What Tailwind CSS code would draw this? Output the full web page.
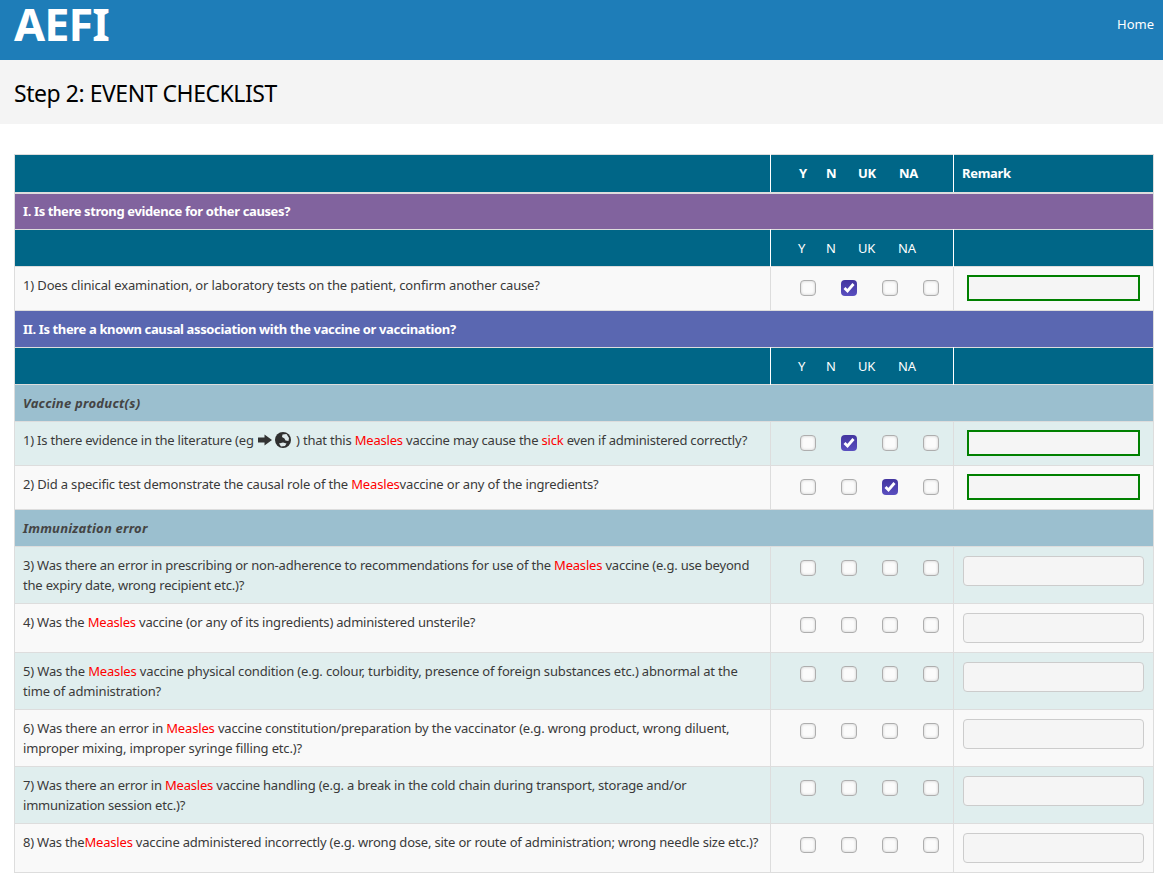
<!DOCTYPE html>
<html><head><meta charset="utf-8"><title>AEFI</title>
<script src="https://cdn.jsdelivr.net/npm/@tailwindcss/browser@4"></script></head>
<body class="bg-white font-['Noto_Sans','Liberation_Sans',sans-serif] text-[#3a3a3a] text-[13px] tracking-[-0.2px] leading-5 h-[880px] overflow-hidden">
<header class="h-[60px] bg-[#1e7db8] flex justify-between pl-[14px] pr-[9px] text-white">
<a class="text-[45px] leading-[48px] font-bold tracking-[-0.9px]">AEFI</a>
<a class="mt-[14px] text-[13px] tracking-normal">Home</a>
</header>
<div class="h-16 bg-[#f4f4f4] flex items-center pl-[14px]"><h1 class="text-[23px] tracking-[-0.46px] text-black font-normal mt-[2px]">Step 2: EVENT CHECKLIST</h1></div>
<div class="pt-[30px] px-[14px]">
<table class="w-[1140px] table-fixed border-collapse border border-[#ddd]">
<colgroup><col class="w-[756px]"><col class="w-[183px]"><col></colgroup>
<tbody>
<tr class="h-[38px] bg-[#006687] text-white font-bold border-b-2 border-[#ddd] tracking-[-0.3px]"><td></td><td class="border-x border-white"><div class="relative h-5"><span class="absolute left-[28px]">Y</span><span class="absolute left-[55px]">N</span><span class="absolute left-[87px]">UK</span><span class="absolute left-[128px]">NA</span></div></td><td class="px-2">Remark</td></tr>
<tr class="h-[37px] bg-[#81639e] text-white font-bold border-b border-[#ddd] tracking-[-0.38px]"><td colspan="3" class="px-2">I. Is there strong evidence for other causes?</td></tr>
<tr class="h-[37px] bg-[#006687] text-white border-b border-[#ddd]"><td></td><td class="border-x border-white"><div class="relative h-5"><span class="absolute left-[27px]">Y</span><span class="absolute left-[55px]">N</span><span class="absolute left-[87px]">UK</span><span class="absolute left-[127px]">NA</span></div></td><td></td></tr>

<tr class="h-[44px] bg-[#f9f9f9] border-b border-[#ddd] align-top"><td class="p-2 border-r border-[#ddd] tracking-[-0.14px]">1) Does clinical examination, or laboratory tests on the patient, confirm another cause?</td><td class="border-r border-[#ddd]"><div class="flex gap-[25px] pl-[29px] pt-[13px]"><input type="checkbox" class="appearance-none size-4 rounded-[4px] border border-[#aeaeae] bg-[#fbfbfb] shadow-[inset_0_0_3px_rgba(0,0,0,.2)]"><span class="size-4 rounded-[4px] bg-linear-to-b from-[#43359f] to-[#5a4fc0]"><svg viewBox="0 0 16 16" class="size-4"><path d="M3.500 8l3 3 6-7" fill="none" stroke="#fff" stroke-width="2.800"/></svg></span><input type="checkbox" class="appearance-none size-4 rounded-[4px] border border-[#aeaeae] bg-[#fbfbfb] shadow-[inset_0_0_3px_rgba(0,0,0,.2)]"><input type="checkbox" class="appearance-none size-4 rounded-[4px] border border-[#aeaeae] bg-[#fbfbfb] shadow-[inset_0_0_3px_rgba(0,0,0,.2)]"></div></td><td class="pt-2 pl-[13px]"><input class="block w-[173px] h-[26px] bg-[#f5f5f5] border-2 border-[#008000]"></td></tr>

<tr class="h-[37px] bg-[#5a67b1] text-white font-bold border-b border-[#ddd] tracking-[-0.36px]"><td colspan="3" class="px-2">II. Is there a known causal association with the vaccine or vaccination?</td></tr>
<tr class="h-[37px] bg-[#006687] text-white border-b border-[#ddd]"><td></td><td class="border-x border-white"><div class="relative h-5"><span class="absolute left-[27px]">Y</span><span class="absolute left-[55px]">N</span><span class="absolute left-[87px]">UK</span><span class="absolute left-[127px]">NA</span></div></td><td></td></tr>
<tr class="h-[37px] bg-[#9bbfcf] text-[#444] font-bold italic border-b border-[#ddd] tracking-[0.25px]"><td colspan="3" class="px-2">Vaccine product(s)</td></tr>

<tr class="h-[44px] bg-[#e0eeee] border-b border-[#ddd] align-top"><td class="p-2 border-r border-[#ddd]"><span class="flex items-center whitespace-nowrap">1) Is there evidence in the literature (eg&nbsp;<svg viewBox="0 0 14 12" class="w-[14px] h-3 ml-px"><path d="M0 3.500h6.500V.5L14 6l-7.500 5.500v-3H0z" fill="#333"/></svg><svg viewBox="0 0 16 16" class="size-4 ml-[3px] mr-[2px]"><circle cx="8" cy="8" r="8" fill="#2f2f2f"/><path d="M7.500 2.500l4-.5 2.500 4-.5 3-3-.5-1-2-2.500-1.500zM4 11.500l4-1 3.500 1-1.500 2.500-4 .5z" fill="#dfe9ea"/></svg>&nbsp;) that this&nbsp;<span class="text-[#f00]">Measles</span>&nbsp;vaccine may cause the&nbsp;<span class="text-[#f00]">sick</span>&nbsp;even if administered correctly?</span></td><td class="border-r border-[#ddd]"><div class="flex gap-[25px] pl-[29px] pt-[13px]"><input type="checkbox" class="appearance-none size-4 rounded-[4px] border border-[#aeaeae] bg-[#fbfbfb] shadow-[inset_0_0_3px_rgba(0,0,0,.2)]"><span class="size-4 rounded-[4px] bg-linear-to-b from-[#43359f] to-[#5a4fc0]"><svg viewBox="0 0 16 16" class="size-4"><path d="M3.500 8l3 3 6-7" fill="none" stroke="#fff" stroke-width="2.800"/></svg></span><input type="checkbox" class="appearance-none size-4 rounded-[4px] border border-[#aeaeae] bg-[#fbfbfb] shadow-[inset_0_0_3px_rgba(0,0,0,.2)]"><input type="checkbox" class="appearance-none size-4 rounded-[4px] border border-[#aeaeae] bg-[#fbfbfb] shadow-[inset_0_0_3px_rgba(0,0,0,.2)]"></div></td><td class="pt-2 pl-[13px]"><input class="block w-[173px] h-[26px] bg-[#f5f5f5] border-2 border-[#008000]"></td></tr>

<tr class="h-[44px] bg-[#f9f9f9] border-b border-[#ddd] align-top"><td class="p-2 border-r border-[#ddd] tracking-[-0.17px]">2) Did a specific test demonstrate the causal role of the <span class="text-[#f00]">Measles</span>vaccine or any of the ingredients?</td><td class="border-r border-[#ddd]"><div class="flex gap-[25px] pl-[29px] pt-[13px]"><input type="checkbox" class="appearance-none size-4 rounded-[4px] border border-[#aeaeae] bg-[#fbfbfb] shadow-[inset_0_0_3px_rgba(0,0,0,.2)]"><input type="checkbox" class="appearance-none size-4 rounded-[4px] border border-[#aeaeae] bg-[#fbfbfb] shadow-[inset_0_0_3px_rgba(0,0,0,.2)]"><span class="size-4 rounded-[4px] bg-linear-to-b from-[#43359f] to-[#5a4fc0]"><svg viewBox="0 0 16 16" class="size-4"><path d="M3.500 8l3 3 6-7" fill="none" stroke="#fff" stroke-width="2.800"/></svg></span><input type="checkbox" class="appearance-none size-4 rounded-[4px] border border-[#aeaeae] bg-[#fbfbfb] shadow-[inset_0_0_3px_rgba(0,0,0,.2)]"></div></td><td class="pt-2 pl-[13px]"><input class="block w-[173px] h-[26px] bg-[#f5f5f5] border-2 border-[#008000]"></td></tr>

<tr class="h-[37px] bg-[#9bbfcf] text-[#444] font-bold italic border-b border-[#ddd] tracking-[0.2px]"><td colspan="3" class="px-2">Immunization error</td></tr>

<tr class="h-[57px] bg-[#e0eeee] border-b border-[#ddd] align-top"><td class="p-2 border-r border-[#ddd] tracking-[-0.2px]">3) Was there an error in prescribing or non-adherence to recommendations for use of the <span class="text-[#f00]">Measles</span> vaccine (e.g. use beyond the expiry date, wrong recipient etc.)?</td><td class="border-r border-[#ddd]"><div class="flex gap-[25px] pl-[29px] pt-[13px]"><input type="checkbox" class="appearance-none size-4 rounded-[4px] border border-[#aeaeae] bg-[#fbfbfb] shadow-[inset_0_0_3px_rgba(0,0,0,.2)]"><input type="checkbox" class="appearance-none size-4 rounded-[4px] border border-[#aeaeae] bg-[#fbfbfb] shadow-[inset_0_0_3px_rgba(0,0,0,.2)]"><input type="checkbox" class="appearance-none size-4 rounded-[4px] border border-[#aeaeae] bg-[#fbfbfb] shadow-[inset_0_0_3px_rgba(0,0,0,.2)]"><input type="checkbox" class="appearance-none size-4 rounded-[4px] border border-[#aeaeae] bg-[#fbfbfb] shadow-[inset_0_0_3px_rgba(0,0,0,.2)]"></div></td><td class="pt-[9px] pl-[9px]"><input class="block w-[181px] h-[30px] bg-[#f5f5f5] border border-[#ccc] rounded"></td></tr>

<tr class="h-[49px] bg-[#f9f9f9] border-b border-[#ddd] align-top"><td class="p-2 border-r border-[#ddd]">4) Was the <span class="text-[#f00]">Measles</span> vaccine (or any of its ingredients) administered unsterile?</td><td class="border-r border-[#ddd]"><div class="flex gap-[25px] pl-[29px] pt-[13px]"><input type="checkbox" class="appearance-none size-4 rounded-[4px] border border-[#aeaeae] bg-[#fbfbfb] shadow-[inset_0_0_3px_rgba(0,0,0,.2)]"><input type="checkbox" class="appearance-none size-4 rounded-[4px] border border-[#aeaeae] bg-[#fbfbfb] shadow-[inset_0_0_3px_rgba(0,0,0,.2)]"><input type="checkbox" class="appearance-none size-4 rounded-[4px] border border-[#aeaeae] bg-[#fbfbfb] shadow-[inset_0_0_3px_rgba(0,0,0,.2)]"><input type="checkbox" class="appearance-none size-4 rounded-[4px] border border-[#aeaeae] bg-[#fbfbfb] shadow-[inset_0_0_3px_rgba(0,0,0,.2)]"></div></td><td class="pt-[9px] pl-[9px]"><input class="block w-[181px] h-[30px] bg-[#f5f5f5] border border-[#ccc] rounded"></td></tr>

<tr class="h-[57px] bg-[#e0eeee] border-b border-[#ddd] align-top"><td class="p-2 border-r border-[#ddd] tracking-[-0.16px]">5) Was the <span class="text-[#f00]">Measles</span> vaccine physical condition (e.g. colour, turbidity, presence of foreign substances etc.) abnormal at the time of administration?</td><td class="border-r border-[#ddd]"><div class="flex gap-[25px] pl-[29px] pt-[13px]"><input type="checkbox" class="appearance-none size-4 rounded-[4px] border border-[#aeaeae] bg-[#fbfbfb] shadow-[inset_0_0_3px_rgba(0,0,0,.2)]"><input type="checkbox" class="appearance-none size-4 rounded-[4px] border border-[#aeaeae] bg-[#fbfbfb] shadow-[inset_0_0_3px_rgba(0,0,0,.2)]"><input type="checkbox" class="appearance-none size-4 rounded-[4px] border border-[#aeaeae] bg-[#fbfbfb] shadow-[inset_0_0_3px_rgba(0,0,0,.2)]"><input type="checkbox" class="appearance-none size-4 rounded-[4px] border border-[#aeaeae] bg-[#fbfbfb] shadow-[inset_0_0_3px_rgba(0,0,0,.2)]"></div></td><td class="pt-[9px] pl-[9px]"><input class="block w-[181px] h-[30px] bg-[#f5f5f5] border border-[#ccc] rounded"></td></tr>

<tr class="h-[57px] bg-[#f9f9f9] border-b border-[#ddd] align-top"><td class="p-2 border-r border-[#ddd] tracking-[-0.16px]">6) Was there an error in <span class="text-[#f00]">Measles</span> vaccine constitution/preparation by the vaccinator (e.g. wrong product, wrong diluent, improper mixing, improper syringe filling etc.)?</td><td class="border-r border-[#ddd]"><div class="flex gap-[25px] pl-[29px] pt-[13px]"><input type="checkbox" class="appearance-none size-4 rounded-[4px] border border-[#aeaeae] bg-[#fbfbfb] shadow-[inset_0_0_3px_rgba(0,0,0,.2)]"><input type="checkbox" class="appearance-none size-4 rounded-[4px] border border-[#aeaeae] bg-[#fbfbfb] shadow-[inset_0_0_3px_rgba(0,0,0,.2)]"><input type="checkbox" class="appearance-none size-4 rounded-[4px] border border-[#aeaeae] bg-[#fbfbfb] shadow-[inset_0_0_3px_rgba(0,0,0,.2)]"><input type="checkbox" class="appearance-none size-4 rounded-[4px] border border-[#aeaeae] bg-[#fbfbfb] shadow-[inset_0_0_3px_rgba(0,0,0,.2)]"></div></td><td class="pt-[9px] pl-[9px]"><input class="block w-[181px] h-[30px] bg-[#f5f5f5] border border-[#ccc] rounded"></td></tr>

<tr class="h-[57px] bg-[#e0eeee] border-b border-[#ddd] align-top"><td class="p-2 border-r border-[#ddd] tracking-[-0.21px]">7) Was there an error in <span class="text-[#f00]">Measles</span> vaccine handling (e.g. a break in the cold chain during transport, storage and/or immunization session etc.)?</td><td class="border-r border-[#ddd]"><div class="flex gap-[25px] pl-[29px] pt-[13px]"><input type="checkbox" class="appearance-none size-4 rounded-[4px] border border-[#aeaeae] bg-[#fbfbfb] shadow-[inset_0_0_3px_rgba(0,0,0,.2)]"><input type="checkbox" class="appearance-none size-4 rounded-[4px] border border-[#aeaeae] bg-[#fbfbfb] shadow-[inset_0_0_3px_rgba(0,0,0,.2)]"><input type="checkbox" class="appearance-none size-4 rounded-[4px] border border-[#aeaeae] bg-[#fbfbfb] shadow-[inset_0_0_3px_rgba(0,0,0,.2)]"><input type="checkbox" class="appearance-none size-4 rounded-[4px] border border-[#aeaeae] bg-[#fbfbfb] shadow-[inset_0_0_3px_rgba(0,0,0,.2)]"></div></td><td class="pt-[9px] pl-[9px]"><input class="block w-[181px] h-[30px] bg-[#f5f5f5] border border-[#ccc] rounded"></td></tr>

<tr class="h-[49px] bg-[#f9f9f9] border-b border-[#ddd] align-top"><td class="p-2 border-r border-[#ddd] whitespace-nowrap">8) Was the<span class="text-[#f00]">Measles</span> vaccine administered incorrectly (e.g. wrong dose, site or route of administration; wrong needle size etc.)?</td><td class="border-r border-[#ddd]"><div class="flex gap-[25px] pl-[29px] pt-[13px]"><input type="checkbox" class="appearance-none size-4 rounded-[4px] border border-[#aeaeae] bg-[#fbfbfb] shadow-[inset_0_0_3px_rgba(0,0,0,.2)]"><input type="checkbox" class="appearance-none size-4 rounded-[4px] border border-[#aeaeae] bg-[#fbfbfb] shadow-[inset_0_0_3px_rgba(0,0,0,.2)]"><input type="checkbox" class="appearance-none size-4 rounded-[4px] border border-[#aeaeae] bg-[#fbfbfb] shadow-[inset_0_0_3px_rgba(0,0,0,.2)]"><input type="checkbox" class="appearance-none size-4 rounded-[4px] border border-[#aeaeae] bg-[#fbfbfb] shadow-[inset_0_0_3px_rgba(0,0,0,.2)]"></div></td><td class="pt-[9px] pl-[9px]"><input class="block w-[181px] h-[30px] bg-[#f5f5f5] border border-[#ccc] rounded"></td></tr>
</tbody></table></div>
</body></html>
